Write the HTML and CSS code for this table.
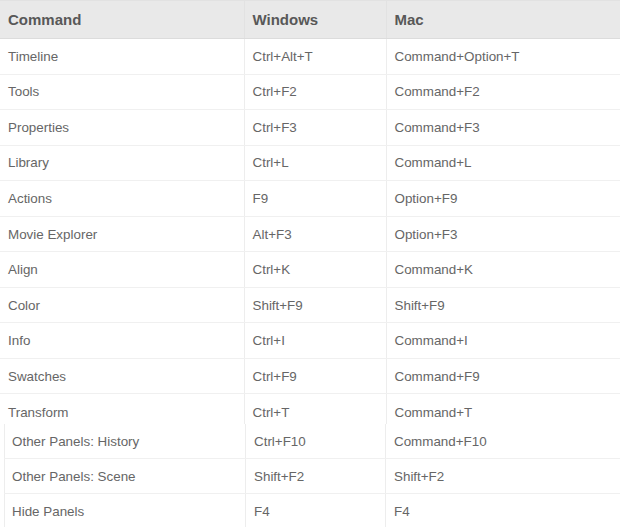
FILE: index.html
```html
<!DOCTYPE html>
<html>
<head>
<meta charset="utf-8">
<link rel="stylesheet" href="styles.css">
</head>
<body>
<table class="keys main">
  <thead>
    <tr><th class="c1">Command</th><th class="c2">Windows</th><th class="c3">Mac</th></tr>
  </thead>
  <tbody>
    <tr><td>Timeline</td><td>Ctrl+Alt+T</td><td>Command+Option+T</td></tr>
    <tr><td>Tools</td><td>Ctrl+F2</td><td>Command+F2</td></tr>
    <tr><td>Properties</td><td>Ctrl+F3</td><td>Command+F3</td></tr>
    <tr><td>Library</td><td>Ctrl+L</td><td>Command+L</td></tr>
    <tr><td>Actions</td><td>F9</td><td>Option+F9</td></tr>
    <tr><td>Movie Explorer</td><td>Alt+F3</td><td>Option+F3</td></tr>
    <tr><td>Align</td><td>Ctrl+K</td><td>Command+K</td></tr>
    <tr><td>Color</td><td>Shift+F9</td><td>Shift+F9</td></tr>
    <tr><td>Info</td><td>Ctrl+I</td><td>Command+I</td></tr>
    <tr><td>Swatches</td><td>Ctrl+F9</td><td>Command+F9</td></tr>
    <tr class="last"><td>Transform</td><td>Ctrl+T</td><td>Command+T</td></tr>
  </tbody>
</table>
<table class="keys sub">
  <tbody>
    <tr><td class="s1">Other Panels: History</td><td class="s2">Ctrl+F10</td><td>Command+F10</td></tr>
    <tr><td class="s1">Other Panels: Scene</td><td class="s2">Shift+F2</td><td>Shift+F2</td></tr>
    <tr><td class="s1">Hide Panels</td><td class="s2">F4</td><td>F4</td></tr>
  </tbody>
</table>
</body>
</html>
```
FILE: styles.css
```css
html, body {
  margin: 0;
  padding: 0;
  background: #fff;
}
body {
  font-family: "Liberation Sans", Arial, sans-serif;
  color: #666;
}
.keys {
  border-collapse: collapse;
  width: 620px;
  table-layout: fixed;
}
.keys th {
  background: #e9e9e9;
  font-size: 15px;
  font-weight: bold;
  color: #585858;
  text-align: left;
  height: 38px;
  padding: 0 8px;
  border-top: 1px solid #e2e2e2;
  border-bottom: 1px solid #dcdcdc;
  border-left: 1px solid #e2e2e2;
  box-sizing: border-box;
}
.keys th:first-child { border-left: none; }
.c1 { width: 244px; }
.c2 { width: 142px; }
.keys td {
  font-size: 13.4px;
  padding: 0 8px;
  height: 35.56px;
  box-sizing: border-box;
  border-bottom: 1px solid #f0f0f0;
  border-left: 1px solid #ededed;
}
.keys td:first-child { border-left: none; }
.main tr.last td {
  height: 30px;
  border-bottom: none;
  padding-top: 6px;
  padding-bottom: 0;
}
.sub {
  width: 616px;
  margin-left: 4px;
}
.sub td {
  height: 35px;
}
.sub td.s1 {
  width: 241px;
  padding-left: 7px;
  border-left: 1px solid #ededed;
}
.sub td.s2 { width: 140px; }
.sub tr:last-child td { border-bottom: none; }
```
